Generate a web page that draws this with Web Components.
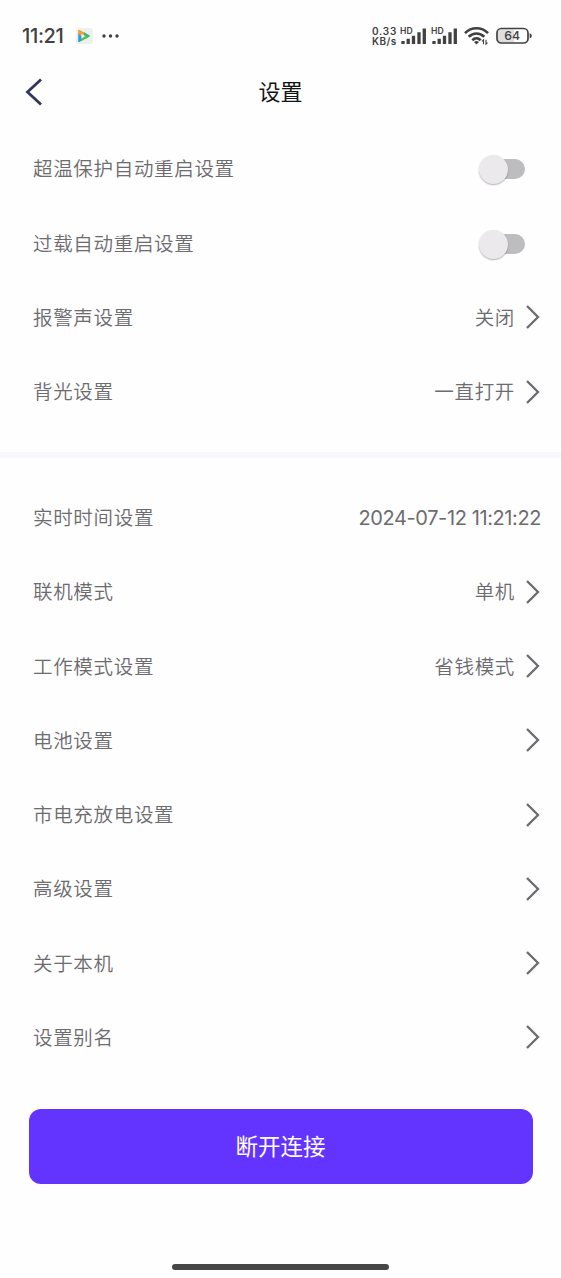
<!DOCTYPE html>
<html lang="zh-CN">
<head>
<meta charset="utf-8">
<meta name="viewport" content="width=device-width, initial-scale=1">
<title>设置</title>
<style>
  body {
    margin: 0;
    background: #fefefe;
    color: #6c6b6f;
    font-family: "Noto Sans CJK SC", sans-serif;
  }
</style>
</head>
<body>
<settings-page>
  <status-bar slot="status" time="11:21" rate="0.33" battery="64"></status-bar>
  <nav-bar slot="nav">设置</nav-bar>
  <setting-group>
    <setting-row>超温保护自动重启设置<toggle-switch slot="control"></toggle-switch></setting-row>
    <setting-row>过载自动重启设置<toggle-switch slot="control"></toggle-switch></setting-row>
    <setting-row arrow>报警声设置<span slot="value">关闭</span></setting-row>
    <setting-row arrow>背光设置<span slot="value">一直打开</span></setting-row>
  </setting-group>
  <setting-group>
    <setting-row numeric>实时时间设置<span slot="value">2024-07-12 11:21:22</span></setting-row>
    <setting-row arrow>联机模式<span slot="value">单机</span></setting-row>
    <setting-row arrow>工作模式设置<span slot="value">省钱模式</span></setting-row>
    <setting-row arrow>电池设置</setting-row>
    <setting-row arrow>市电充放电设置</setting-row>
    <setting-row arrow>高级设置</setting-row>
    <setting-row arrow>关于本机</setting-row>
    <setting-row arrow>设置别名</setting-row>
  </setting-group>
  <primary-button slot="footer">断开连接</primary-button>
</settings-page>

<script type="module">
  class SettingsPage extends HTMLElement {
    constructor() {
      super();
      this.attachShadow({mode: "open"});
      this.shadowRoot.innerHTML = `
      <style>
        :host {
          display: flex;
          flex-direction: column;
          box-sizing: border-box;
          height: 1278px;
          overflow: hidden;
        }
        footer {
          padding: 34.5px 28.5px 0;
        }
        .home {
          width: 217px;
          height: 5.5px;
          margin: auto auto 8.5px;
          border-radius: 3px;
          background: #464646;
          flex: none;
        }
      </style>
      <slot name="status"></slot>
      <slot name="nav"></slot>
      <main><slot></slot></main>
      <footer><slot name="footer"></slot></footer>
      <div class="home"></div>
      `;
    }
  }

  class StatusBar extends HTMLElement {
    constructor() {
      super();
      this.attachShadow({mode: "open"});
    }

    connectedCallback() {
      const signal = `
        <svg width="27" height="18" viewBox="0 0 27 18">
          <text x="0" y="7.4" font-size="8.6" font-weight="600" textLength="12.6" lengthAdjust="spacingAndGlyphs" fill="#414141">HD</text>
          <g stroke="#414141" stroke-width="3.3">
            <path d="M3 14v3M8.2 11.8v5.2M13.5 8.8v8.2M19 5.2v11.8M24.3 1.5v15.5"/>
          </g>
        </svg>`;
      this.shadowRoot.innerHTML = `
      <style>
        :host {
          display: flex;
          align-items: center;
          box-sizing: border-box;
          height: 62px;
          padding: 10px 29px 0 22px;
          color: #414141;
          font-family: Inter, sans-serif;
        }
        svg {
          display: block;
          flex: none;
        }
        .time {
          width: 54px;
          font-size: 20px;
          font-weight: 500;
          letter-spacing: -.35px;
        }
        .dots {
          margin-left: 9px;
        }
        .rate {
          display: grid;
          grid-template-rows: 10px 10px;
          width: 26px;
          margin-left: auto;
          font-size: 10px;
          line-height: 10px;
          font-weight: 600;
          white-space: nowrap;
        }
        .rate span:first-child {
          letter-spacing: .8px;
        }
        .rate span:last-child {
          letter-spacing: .45px;
        }
        .signals {
          display: flex;
          gap: 4px;
          margin: 0 6px 0 2px;
        }
        .battery {
          margin-left: 7px;
        }
      </style>
      <span class="time">${this.getAttribute("time")}</span>
      <svg width="17" height="18" viewBox="0 0 17 18">
        <rect y="1" width="17" height="16" rx="3" fill="#edf1ee"/>
        <path d="M2.2 6v8.2q0 1.3 1.3.7l2.7-1.5V8z" fill="#2b9fe5"/>
        <path d="M2.2 7V3.8q0-1.5 1.4-.8l6 3.2L6.8 9.3z" fill="#f79a35"/>
        <path d="m8 5.3 5.3 2.9q1.2.8 0 1.6l-3.5 2L8 9z" fill="#35b87b"/>
        <path d="m5.5 14 6.3-3.5-2-2.5-5 3.5z" fill="#63bd45"/>
        <path d="M5.4 6.8v4.7l3.8-2.3z" fill="#f5f8f4"/>
      </svg>
      <svg class="dots" width="17" height="4" viewBox="0 0 17 4" fill="#414141">
        <circle cx="2" cy="2" r="1.7"/><circle cx="8.5" cy="2" r="1.7"/><circle cx="15" cy="2" r="1.7"/>
      </svg>
      <div class="rate"><span>${this.getAttribute("rate")}</span><span>KB/s</span></div>
      <div class="signals">${signal}${signal}</div>
      <svg width="25" height="20" viewBox="0 0 25 20">
        <g fill="none" stroke="#414141" stroke-width="2.7">
          <path d="M1 7.1C7.5.6 17.5.6 24 7.1"/>
          <path d="M4.7 10.8c4.6-4.4 11-4.4 15.6 0"/>
          <path d="M8.3 14.2c2.5-2.4 5.9-2.4 8.4 0"/>
        </g>
        <path d="m10 16 2.5 2.6L15 16q-2.5-1.8-5 0z" fill="#414141"/>
        <path d="M19.5 18.2v-4.4l-1.5 1.5M22 13.8v4.4l1.5-1.5" fill="none" stroke="#414141" stroke-width="1.1"/>
      </svg>
      <svg class="battery" width="36" height="18" viewBox="0 0 36 18">
        <path d="M5 2.5h13v13H5a3 3 0 0 1-3-3v-7a3 3 0 0 1 3-3z" fill="#dfdfdf"/>
        <rect x="1" y="1.5" width="31" height="14.5" rx="4.3" fill="none" stroke="#414141" stroke-width="1.7"/>
        <path d="M33.6 6.3q2.2.4 2.2 2.5t-2.2 2.5z" fill="#414141"/>
        <text x="16.2" y="13.2" font-size="12.3" font-weight="500" text-anchor="middle" fill="#414141">${this.getAttribute("battery")}</text>
      </svg>
      `;
    }
  }

  class NavBar extends HTMLElement {
    constructor() {
      super();
      this.attachShadow({mode: "open"});
      this.shadowRoot.innerHTML = `
      <style>
        :host {
          display: grid;
          grid-template-columns: 60px 1fr 60px;
          align-items: center;
          height: 60px;
          margin-bottom: 9.7px;
          color: #141414;
        }
        svg {
          display: block;
          margin-left: 25px;
        }
        h1 {
          margin: 0;
          padding-bottom: 4px;
          text-align: center;
          font-size: 22px;
          font-weight: 400;
          line-height: 32px;
        }
      </style>
      <svg width="18" height="28" viewBox="0 0 18 28" fill="none" stroke="#30365c" stroke-width="2.8">
        <path d="M16 1.5 2.5 14 16 26.5"/>
      </svg>
      <h1><slot></slot></h1>
      `;
    }
  }

  class SettingGroup extends HTMLElement {
    constructor() {
      super();
      this.attachShadow({mode: "open"});
      this.shadowRoot.innerHTML = `
      <style>
        :host {
          display: block;
        }
        :host(:not(:last-of-type)) {
          padding-bottom: 23.5px;
          border-bottom: 6px solid #f8f7fb;
          margin-bottom: 22.4px;
        }
      </style>
      <slot></slot>
      `;
    }
  }

  class SettingRow extends HTMLElement {
    constructor() {
      super();
      this.attachShadow({mode: "open"});
      this.shadowRoot.innerHTML = `
      <style>
        :host {
          display: flex;
          align-items: center;
          justify-content: space-between;
          box-sizing: border-box;
          height: 74.25px;
          padding: 0 20px 0 33px;
          font-size: 19.5px;
          font-weight: 350;
          letter-spacing: .68px;
          line-height: 30px;
        }
        .label, slot[name="value"] {
          display: block;
          padding-bottom: 1px;
        }
        .end {
          display: flex;
          align-items: center;
        }
        :host([numeric]) .end {
          font-family: Inter, sans-serif;
          font-size: 20px;
          font-weight: 400;
          letter-spacing: -.4px;
        }
        :host([numeric]) slot[name="value"] {
          padding-bottom: 0;
        }
        svg {
          display: none;
          margin: 0 1px 0 10px;
        }
        :host([arrow]) svg {
          display: block;
        }
      </style>
      <span class="label"><slot></slot></span>
      <div class="end">
        <slot name="value"></slot>
        <slot name="control"></slot>
        <svg width="15" height="24" viewBox="0 0 15 24" fill="none" stroke="#6c6b6f" stroke-width="2.3">
          <path d="M2 1 13 12 2 23"/>
        </svg>
      </div>
      `;
    }
  }

  class ToggleSwitch extends HTMLElement {
    constructor() {
      super();
      this.attachShadow({mode: "open"});
      this.shadowRoot.innerHTML = `
      <style>
        :host {
          display: flex;
          align-items: center;
          width: 46px;
          height: 30px;
          margin: 1px 16px 0 0;
        }
        .track {
          display: flex;
          align-items: center;
          width: 40px;
          height: 20px;
          margin-left: 6px;
          border-radius: 10px;
          background: #bdbcbe;
        }
        .thumb {
          flex: none;
          width: 29px;
          height: 29px;
          margin: 1px 0 0 -6px;
          border-radius: 50%;
          background: #ebe9ec;
          box-shadow: 0 1px 1.5px rgba(0, 0, 0, .3);
        }
      </style>
      <div class="track"><div class="thumb"></div></div>
      `;
    }
  }

  class PrimaryButton extends HTMLElement {
    constructor() {
      super();
      this.attachShadow({mode: "open"});
      this.shadowRoot.innerHTML = `
      <style>
        :host {
          display: block;
        }
        button {
          display: block;
          width: 100%;
          height: 74.5px;
          padding: 0 0 2px;
          border: 0;
          border-radius: 12px;
          background: #6333ff;
          color: #fff;
          font: inherit;
          font-size: 22.5px;
        }
      </style>
      <button><slot></slot></button>
      `;
    }
  }

  customElements.define("settings-page", SettingsPage);
  customElements.define("status-bar", StatusBar);
  customElements.define("nav-bar", NavBar);
  customElements.define("setting-group", SettingGroup);
  customElements.define("setting-row", SettingRow);
  customElements.define("toggle-switch", ToggleSwitch);
  customElements.define("primary-button", PrimaryButton);
</script>
</body>
</html>
